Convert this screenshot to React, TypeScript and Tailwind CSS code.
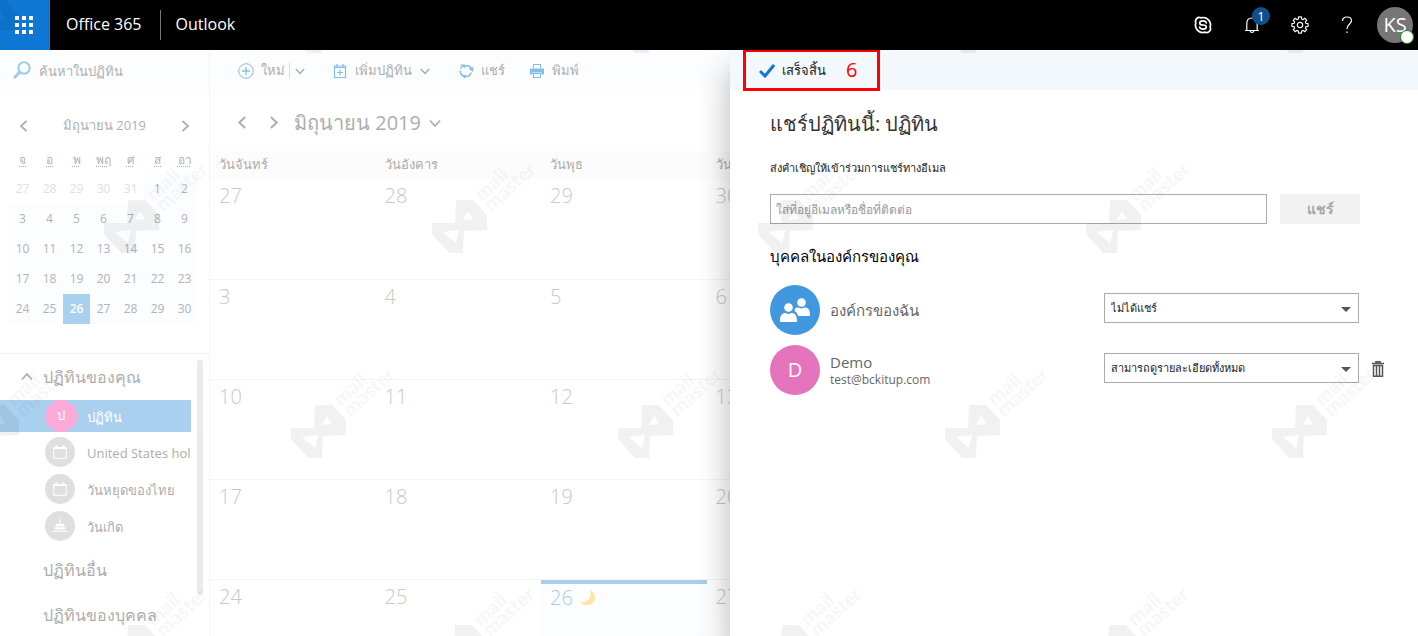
import type { ReactNode } from "react";
import { TbBrandSkype } from "react-icons/tb";

// ---------------------------------------------------------------------------
// Data
// ---------------------------------------------------------------------------

const WEEKDAYS_SHORT = ["จ", "อ", "พ", "พฤ", "ศ", "ส", "อา"];
const WEEKDAYS = ["วันจันทร์", "วันอังคาร", "วันพุธ", "วันพฤหัสบดี"];

const WEEKS = [
  [27, 28, 29, 30, 31, 1, 2],
  [3, 4, 5, 6, 7, 8, 9],
  [10, 11, 12, 13, 14, 15, 16],
  [17, 18, 19, 20, 21, 22, 23],
  [24, 25, 26, 27, 28, 29, 30],
];

const WATERMARKS = [
  [-36, 0], [291, 0], [618, 0], [945, 0], [1272, 0],
  [104, 200], [432, 200], [758, 200], [1086, 200],
  [-36, 405], [291, 405], [618, 405], [945, 405], [1272, 405],
  [104, 625], [431, 625], [758, 625], [1085, 625],
];

// ---------------------------------------------------------------------------
// Icons
// ---------------------------------------------------------------------------

function Chevron({ dir, className }: { dir: "left" | "right" | "up" | "down"; className?: string }) {
  const d = {
    left: "M8.5 1 3 6l5.500 5",
    right: "M3.500 1 9 6l-5.500 5",
    up: "M1 8.500 6 3l5 5.500",
    down: "M1 3.500 6 9l5-5.500",
  }[dir];
  return (
    <svg viewBox="0 0 12 12" fill="none" stroke="currentColor" strokeWidth="1.800" className={className ?? "size-3"}>
      <path d={d} />
    </svg>
  );
}

function BellIcon() {
  return (
    <svg viewBox="0 0 16 18" fill="none" stroke="currentColor" strokeWidth="1.200" className="h-[18px] w-4">
      <path d="M1 14.500h14M2.800 14.500V7.500C2.800 4 5 2 8 2s5.200 2 5.200 5.500v7M6 14.500c.2 1.500 1 2 2 2s1.800-.5 2-2" />
    </svg>
  );
}

function GearIcon() {
  const pts: string[] = [];
  for (let i = 0; i < 8; i++) {
    const base = (i * Math.PI) / 4;
    for (const [off, r] of [[-0.26, 6.2], [-0.18, 8.2], [0.18, 8.2], [0.26, 6.2]]) {
      pts.push(`${(9 + r * Math.cos(base + off)).toFixed(2)},${(9 + r * Math.sin(base + off)).toFixed(2)}`);
    }
  }
  return (
    <svg viewBox="0 0 18 18" fill="none" stroke="currentColor" strokeWidth="1.200" strokeLinejoin="round" className="size-[18px]">
      <polygon points={pts.join(" ")} />
      <circle cx="9" cy="9" r="2.700" />
    </svg>
  );
}

function HelpIcon() {
  return (
    <svg viewBox="0 0 12 18" fill="none" stroke="currentColor" strokeWidth="1.200" className="h-[18px] w-3">
      <path d="M1.500 5C1.500 2.500 3.300 1 6 1s4.500 1.500 4.500 3.800C10.500 8 6 8.300 6 13" />
      <path d="M6 15.500v1.500" />
    </svg>
  );
}

function SearchIcon() {
  return (
    <svg viewBox="0 0 18 18" fill="none" stroke="currentColor" className="size-[18px] text-[#9ccbee]">
      <circle cx="11" cy="7" r="5.700" strokeWidth="2" />
      <path d="m7 11-6 6" strokeWidth="3" />
    </svg>
  );
}

function PlusCircleIcon() {
  return (
    <svg viewBox="0 0 16 16" fill="none" stroke="currentColor" className="size-4 text-[#85bdea]">
      <circle cx="8" cy="8" r="7.300" />
      <path d="M8 4v8M4 8h8" strokeWidth="1.300" />
    </svg>
  );
}

function AddCalendarIcon() {
  return (
    <svg viewBox="0 0 14 14" fill="none" stroke="currentColor" className="size-[14px] text-[#85bdea]">
      <path d="M1.500 2h11v11.500h-11zM1.500 3.500h11M4 0v3M10 0v3M7 5.500v6M4 8.500h6" strokeWidth="1.200" />
    </svg>
  );
}

function ShareIcon() {
  return (
    <svg viewBox="0 0 16 16" fill="none" stroke="currentColor" className="size-4 text-[#85bdea]">
      <path
        d="M2.300 7.500v2A5.500 5.500 0 0 0 6 13.500M6.500 2.800h3A5 5 0 0 1 13.500 6.500M13.300 9.500A6 6 0 0 1 9.500 13.500M2.500 5.500 4 3.500"
        strokeWidth="1.400"
      />
      <path d="M2 1.500h5v4zM10.500 5.500 15.500 4l-.5 5zM5.500 11.500l4.500 1.500-4 2.500z" fill="currentColor" stroke="none" />
    </svg>
  );
}

function PrintIcon() {
  return (
    <svg viewBox="0 0 16 14" fill="currentColor" className="h-[14px] w-4 text-[#85bdea]">
      <path d="M4 0h8v4h-1V1H5v3H4zM1 4.500h14v6h-2.500v-2h-9v2H1zM4 9h8v5H4zm1 1v3h6v-3z" />
    </svg>
  );
}

function CalendarGlyph() {
  return (
    <svg viewBox="0 0 14 14" fill="none" stroke="#fff" className="size-[14px]">
      <path d="M.7 2.500h12.600v10.800H.7z" />
      <path d="M.7 3h12.600M3.500.5v2M10.500.5v2" strokeWidth="2" />
    </svg>
  );
}

function CakeGlyph() {
  return (
    <svg viewBox="0 0 16 14" fill="#fff" className="h-[14px] w-4">
      <path d="M7.500 0h1v5h-1zM4 5h8v2.500H4zM2.500 8.300h11v2h-11zM.5 11.500h15v1.200H.5z" />
    </svg>
  );
}

function PeopleIcon() {
  return (
    <svg viewBox="0 0 30 24" fill="#fff" className="h-6 w-[30px]">
      <circle cx="21.500" cy="4.500" r="4.300" />
      <path d="M14.500 11.500c1-2 3-1.900 4.500-1.900.8.700 1.600 1 2.500 1s1.700-.3 2.500-1c4.500-.2 6 2 6 8.400H18c-.5-2.500-1.500-4-3.500-4.800.6-.5.500-1.200 0-1.700z" />
      <circle cx="8.500" cy="9.500" r="5" fill="#4298de" />
      <circle cx="8.500" cy="9.500" r="4.300" />
      <path d="M0 24c0-6.500 1.500-9 6-9 1.600 1.200 3.400 1.200 5 0 4.500 0 6 2.500 6 9z" />
    </svg>
  );
}

function TrashIcon() {
  return (
    <svg viewBox="0 0 12 16" fill="none" stroke="currentColor" className="h-4 w-3 text-[#555]">
      <path d="M0 2.500h12M4 2V.7h4V2" strokeWidth="1.600" />
      <path d="M1.500 4.500h9v10.800h-9zM4.500 4.500v10.500M7.500 4.500v10.500" strokeWidth="1.500" />
    </svg>
  );
}

// ---------------------------------------------------------------------------
// Watermark
// ---------------------------------------------------------------------------

function Watermarks() {
  return (
    <svg className="pointer-events-none absolute inset-0 z-30 size-full" aria-hidden="true">
      {WATERMARKS.map(([x, y]) => (
        <g key={`${x}-${y}`} transform={`translate(${x} ${y})`} fill="#000" fillOpacity="0.055">
          <path
            fillRule="evenodd"
            d="M24 0h17l14 15v15l-23 1-1 22H17L0 34V23h23zM36 11l-5 9 10-1zM11 32l13 11 3-13z"
          />
          {y > 0 && (
            <g transform="translate(50 2) rotate(-42)" className="font-['Lato',sans-serif] text-[20px] font-black">
              <text x="0" y="0">mail</text>
              <text x="0" y="14">master</text>
            </g>
          )}
        </g>
      ))}
    </svg>
  );
}

// ---------------------------------------------------------------------------
// Header
// ---------------------------------------------------------------------------

function Header() {
  return (
    <header className="relative z-20 flex h-[50px] shrink-0 items-center bg-black text-white">
      <button aria-label="App launcher" className="grid size-[50px] grid-cols-[4px_4px_4px] content-center justify-center gap-[3px] bg-[#0f78d4] pr-0.5">
        {Array.from({ length: 9 }, (_, i) => (
          <span key={i} className="size-1 bg-white" />
        ))}
      </button>
      <a href="#office" className="ml-4 pb-0.5 text-base">Office 365</a>
      <span className="mr-[15px] ml-[18px] h-[30px] w-px bg-[#777]" />
      <a href="#outlook" className="pb-0.5 text-base">Outlook</a>
      <div className="ml-auto flex items-center pr-[5px]">
        <button aria-label="Skype" className="mr-[31px]"><TbBrandSkype className="size-5" /></button>
        <button aria-label="Notifications" className="relative mr-[31px]">
          <BellIcon />
          <span className="absolute -top-[9px] left-2 size-[18px] rounded-full bg-[#0f4f8f] text-center text-[13px] leading-[18px]">1</span>
        </button>
        <button aria-label="Settings" className="mr-8"><GearIcon /></button>
        <button aria-label="Help" className="mr-6"><HelpIcon /></button>
        <button aria-label="Account" className="relative size-9 rounded-full bg-[#767676] text-xl">
          KS
          <span className="absolute -right-px -bottom-px size-[14px] rounded-full border border-[#138a13] bg-white" />
        </button>
      </div>
    </header>
  );
}

// ---------------------------------------------------------------------------
// Sidebar
// ---------------------------------------------------------------------------

function MiniCalendar() {
  return (
    <div className="px-[9px] pt-6">
      <div className="flex h-6 items-center justify-between px-[9px] text-[#b0b0b0]">
        <button aria-label="Previous month"><Chevron dir="left" /></button>
        <span className="text-[13px]">มิถุนายน 2019</span>
        <button aria-label="Next month"><Chevron dir="right" /></button>
      </div>
      <table className="mt-2 w-[189px] table-fixed text-center text-xs text-[#b0b3b8]">
        <thead>
          <tr className="h-7">
            {WEEKDAYS_SHORT.map((d) => (
              <th key={d} className="font-normal">
                <abbr className="underline decoration-dotted underline-offset-2">{d}</abbr>
              </th>
            ))}
          </tr>
        </thead>
        <tbody>
          {WEEKS.map((week, w) => (
            <tr key={w} className="h-[30px]">
              {week.map((day, i) => {
                if (w === 0 && i < 5) return <td key={i} className="text-[#e0e0e0]">{day}</td>;
                if (w === 4 && i === 2) return <td key={i} className="bg-[#aad0f0] font-semibold text-white">{day}</td>;
                return <td key={i} className="bg-[#fbfdff]">{day}</td>;
              })}
            </tr>
          ))}
        </tbody>
      </table>
    </div>
  );
}

function CalendarItem({ icon, children }: { icon: ReactNode; children: ReactNode }) {
  return (
    <li className="flex h-[37px] items-center gap-3 overflow-hidden pl-[45px] text-[13px] whitespace-nowrap text-[#adadad]">
      <span className="grid size-[30px] shrink-0 place-items-center rounded-full bg-[#dfdfdf]">{icon}</span>
      <a href="#calendar" className="pt-1">{children}</a>
    </li>
  );
}

function Sidebar() {
  return (
    <aside className="flex w-[210px] shrink-0 flex-col border-r border-[#f4f4f4]">
      <label className="flex h-10 shrink-0 items-center gap-2 bg-[#fbfdff] pl-[13px]">
        <SearchIcon />
        <input className="w-40 pt-1 text-[13px] outline-none placeholder:text-[#b0b0b0]" placeholder="ค้นหาในปฏิทิน" aria-label="ค้นหาในปฏิทิน" />
      </label>
      <MiniCalendar />
      <div className="mt-[29px] flex min-h-0 grow border-t border-[#f0f0f0] text-[#adadad]">
        <div className="w-[191px]">
          <h2 className="flex h-[46px] items-center gap-[10px] pl-[21px] text-base">
            <Chevron dir="up" />
            ปฏิทินของคุณ
          </h2>
          <ul className="mb-[3px]">
            <li className="mb-px flex h-8 items-center gap-[10px] bg-[#aad0f0] pl-[45px] text-[13px] font-medium text-white">
              <span className="grid size-8 place-items-center rounded-full bg-[#ffa9d9] font-normal">ป</span>
              <a href="#calendar" className="pt-1">ปฏิทิน</a>
            </li>
            <CalendarItem icon={<CalendarGlyph />}>United States holi</CalendarItem>
            <CalendarItem icon={<CalendarGlyph />}>วันหยุดของไทย</CalendarItem>
            <CalendarItem icon={<CakeGlyph />}>วันเกิด</CalendarItem>
          </ul>
          <h2 className="flex h-[45px] items-center pl-[43px] text-base whitespace-nowrap">ปฏิทินอื่น</h2>
          <h2 className="flex h-[45px] items-center pl-[43px] text-base whitespace-nowrap">ปฏิทินของบุคคล</h2>
        </div>
        <span className="mt-[6px] ml-[6px] h-[235px] w-[6px] rounded-full bg-[#ebebeb]" />
      </div>
    </aside>
  );
}

// ---------------------------------------------------------------------------
// Month view
// ---------------------------------------------------------------------------

function MonthView() {
  return (
    <main className="w-[520px] shrink-0 overflow-hidden text-[#adadad]">
      <div className="flex h-10 items-center bg-[#fbfdff] pt-0.5 pl-7 text-[13px]">
        <button className="flex items-center gap-[7px]"><PlusCircleIcon />ใหม่</button>
        <span className="ml-1 h-4 w-px bg-[#ddd]" />
        <button aria-label="New options" className="mr-7 ml-[5px]"><Chevron dir="down" className="size-[10px]" /></button>
        <button className="mr-7 flex items-center gap-2">
          <AddCalendarIcon />เพิ่มปฏิทิน<Chevron dir="down" className="size-[10px]" />
        </button>
        <button className="mr-6 flex items-center gap-[7px]"><ShareIcon />แชร์</button>
        <button className="flex items-center gap-[7px]"><PrintIcon />พิมพ์</button>
      </div>
      <div className="flex h-[61px] items-center pt-1 pl-[26px]">
        <button aria-label="Previous"><Chevron dir="left" className="size-[13px]" /></button>
        <button aria-label="Next" className="ml-[18px]"><Chevron dir="right" className="size-[13px]" /></button>
        <button className="ml-[14px] flex items-center gap-2 text-xl">
          มิถุนายน 2019
          <Chevron dir="down" />
        </button>
      </div>
      <table className="w-[662px] table-fixed">
        <thead>
          <tr className="h-7 bg-[#fcfcfc] text-left text-[13px]">
            {WEEKDAYS.map((d) => (
              <th key={d} className="pl-[9px] font-normal">{d}</th>
            ))}
          </tr>
        </thead>
        <tbody>
          {WEEKS.map((week, w) => (
            <tr key={w} className="h-[100px] border-b border-[#f5f5f5] align-top text-xl font-light text-[#c8c8c8]">
              {week.slice(0, WEEKDAYS.length).map((day, i) =>
                w === 4 && i === 2 ? (
                  <td key={i} className="bg-[#fbfdff] text-[#a4ccef]">
                    <div className="h-1 bg-[#a8ceec]" />
                    <span className="flex items-center gap-2 pl-[9px]">
                      {day}
                      <svg viewBox="0 0 16 16" className="size-[15px]" fill="#ffe3a0">
                        <path d="M10 0c7 4 7 16-4 16-3 0-5-1-6-3 7 1 12-5 10-13z" />
                      </svg>
                    </span>
                  </td>
                ) : (
                  <td key={i} className="pt-[3px] pl-[9px]">{day}</td>
                )
              )}
            </tr>
          ))}
        </tbody>
      </table>
    </main>
  );
}

// ---------------------------------------------------------------------------
// Share panel
// ---------------------------------------------------------------------------

function PermissionSelect({ id, value }: { id: string; value: string }) {
  return (
    <div className="relative mb-1 w-[255px]">
      <select id={id} className="block h-[30px] w-full appearance-none border border-[#ababab] bg-white pl-[6px] text-[11px] text-[#222] outline-none">
        <option>{value}</option>
      </select>
      <svg viewBox="0 0 10 5" className="pointer-events-none absolute top-[14px] right-2 h-[5px] w-[10px]" fill="#555">
        <path d="M0 0h10L5 5z" />
      </svg>
    </div>
  );
}

function SharePanel() {
  return (
    <section className="z-10 min-w-0 grow bg-white shadow-[0_20px_30px_rgba(0,0,0,0.3)]">
      <div className="flex h-10 items-center bg-[#f3f8fd] pl-[13px]">
        <div className="relative z-30 flex h-[42px] w-[137px] items-center border-[3px] border-[#f00] pl-[13px]">
          <button className="flex items-center gap-[7px] pt-0.5 text-[13px] text-[#222]">
            <svg viewBox="0 0 16 14" className="h-[14px] w-4" fill="none" stroke="#1176d2" strokeWidth="3">
              <path d="m1 7 5 5 9-11" />
            </svg>
            เสร็จสิ้น
          </button>
          <span className="ml-5 text-xl text-[#f00]">6</span>
        </div>
      </div>

      <div className="px-10 pt-[18px]">
        <h1 className="text-xl leading-8 text-[#333]">แชร์ปฏิทินนี้: ปฏิทิน</h1>
        <label htmlFor="invite" className="mt-[18px] block text-[11px] leading-5 text-[#222]">
          ส่งคำเชิญให้เข้าร่วมการแชร์ทางอีเมล
        </label>
        <div className="mt-4 mr-[18px] flex gap-[13px]">
          <input
            id="invite"
            className="h-[30px] min-w-0 grow border border-[#ababab] px-[5px] text-xs outline-none placeholder:text-[#999]"
            placeholder="ใส่ที่อยู่อีเมลหรือชื่อที่ติดต่อ"
          />
          <button className="h-[30px] w-20 bg-[#f2f2f2] text-sm font-semibold text-[#a6a6a6]">แชร์</button>
        </div>

        <h2 className="mt-5 text-[15px] leading-6 font-medium text-black">บุคคลในองค์กรของคุณ</h2>
        <div className="mt-[17px] flex h-[50px] items-center">
          <span className="grid size-[50px] place-items-center rounded-full bg-[#4298de]"><PeopleIcon /></span>
          <label htmlFor="org" className="ml-[10px] grow text-[15px] text-[#666]">องค์กรของฉัน</label>
          <div className="mr-[19px]"><PermissionSelect id="org" value="ไม่ได้แชร์" /></div>
        </div>
        <div className="mt-[10px] flex h-[50px] items-center">
          <span className="grid size-[50px] place-items-center rounded-full bg-[#e573bb] text-xl text-white">D</span>
          <label htmlFor="demo" className="ml-[10px] flex grow flex-col text-[#666]">
            <span className="text-[15px] leading-5">Demo</span>
            <span className="text-xs leading-4">test@bckitup.com</span>
          </label>
          <PermissionSelect id="demo" value="สามารถดูรายละเอียดทั้งหมด" />
          <button aria-label="Remove" className="-mr-[6px] mb-0.5 ml-[13px]"><TrashIcon /></button>
        </div>
      </div>
    </section>
  );
}

export default function App() {
  return (
    <div className="relative flex h-screen flex-col overflow-hidden bg-white font-['Open_Sans','Noto_Sans',sans-serif]">
      <Header />
      <div className="flex min-h-0 grow">
        <Sidebar />
        <MonthView />
        <SharePanel />
      </div>
      <Watermarks />
    </div>
  );
}
